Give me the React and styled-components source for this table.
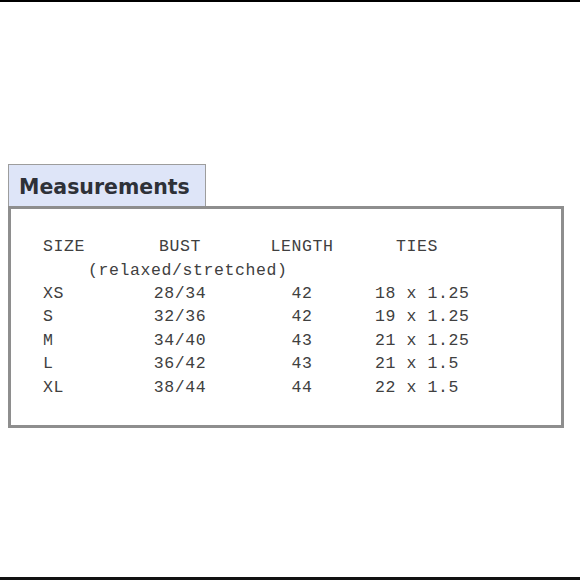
import styled, { createGlobalStyle } from 'styled-components'

const GlobalStyle = createGlobalStyle`
  html, body {
    margin: 0;
    padding: 0;
    background: #ffffff;
  }
`

const rows = [
  { size: 'XS', bust: '28/34', length: '42', ties: '18 x 1.25' },
  { size: 'S', bust: '32/36', length: '42', ties: '19 x 1.25' },
  { size: 'M', bust: '34/40', length: '43', ties: '21 x 1.25' },
  { size: 'L', bust: '36/42', length: '43', ties: '21 x 1.5' },
  { size: 'XL', bust: '38/44', length: '44', ties: '22 x 1.5' },
]

function App() {
  return (
    <>
      <GlobalStyle />
      <Page>
        <Section>
          <Tab>Measurements</Tab>
          <Box>
            <SizeGrid>
              <Cell>SIZE</Cell>
              <Cell $center>BUST</Cell>
              <Cell $center>LENGTH</Cell>
              <Cell $indent={33}>TIES</Cell>
              <Note>(relaxed/stretched)</Note>
              {rows.map((row) => (
                <Row key={row.size}>
                  <Cell>{row.size}</Cell>
                  <Cell $center>{row.bust}</Cell>
                  <Cell $center>{row.length}</Cell>
                  <Cell $indent={12}>{row.ties}</Cell>
                </Row>
              ))}
            </SizeGrid>
          </Box>
        </Section>
      </Page>
    </>
  )
}

const Page = styled.main`
  box-sizing: border-box;
  width: 580px;
  height: 580px;
  border-top: 2px solid #000000;
  border-bottom: 3px solid #111111;
  padding-top: 162px;
  padding-left: 8px;
`

const Section = styled.section`
  display: flex;
  flex-direction: column;
  align-items: flex-start;
  width: 556px;
`

const Tab = styled.h2`
  box-sizing: border-box;
  width: 198px;
  height: 44px;
  margin: 0 0 -2px;
  padding: 9px 0 0 10px;
  background: #dee5f8;
  border: 1px solid #9d9d9d;
  border-bottom: none;
  color: #2e3138;
  font-family: 'DejaVu Sans', Verdana, sans-serif;
  font-size: 20.5px;
  font-weight: 700;
  line-height: 26px;
`

const Box = styled.div`
  box-sizing: border-box;
  width: 556px;
  height: 222px;
  padding: 26px 0 0 32px;
  background: #ffffff;
  border: 3px solid #8e8e8e;
`

const SizeGrid = styled.div`
  display: grid;
  grid-template-columns: 76px 122px 122px 1fr;
  grid-auto-rows: 23.4px;
  align-items: center;
  color: #404040;
  font-family: 'Liberation Mono', 'Courier New', monospace;
  font-size: 16.5px;
  letter-spacing: 0.6px;
`

const Row = styled.div`
  display: contents;
`

const Cell = styled.span`
  text-align: ${({ $center }) => ($center ? 'center' : 'left')};
  padding-left: ${({ $indent }) => ($indent ? `${$indent}px` : '0')};
  white-space: pre;
`

const Note = styled.span`
  grid-column: 1 / -1;
  padding-left: 45px;
  white-space: pre;
`

export default App
